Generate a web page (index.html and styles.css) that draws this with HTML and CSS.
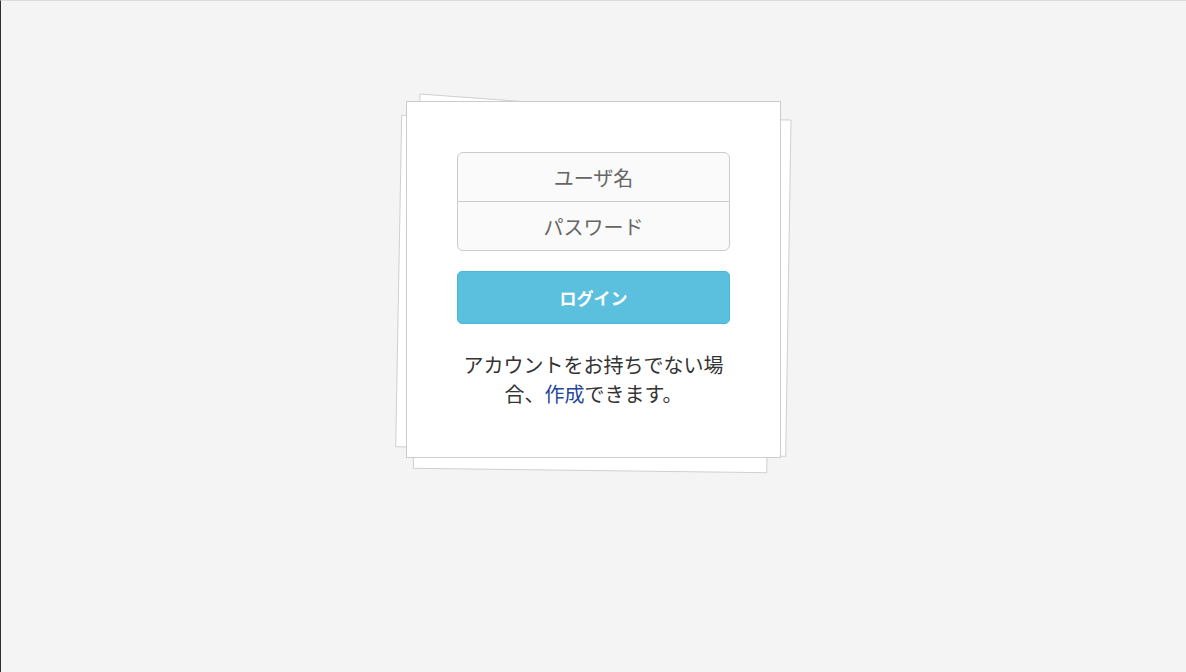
FILE: index.html
```html
<!DOCTYPE html>
<html lang="ja">
<head>
<meta charset="utf-8">
<title>ログイン</title>
<link rel="stylesheet" href="styles.css">
</head>
<body>
<main class="page">
  <div class="stack">
    <svg class="sheets" width="420" height="400" viewBox="0 0 420 400" aria-hidden="true">
      <polygon class="sheet" points="15.7,34.3 405,39 399.7,375.3 9.7,365.7"/>
      <polygon class="sheet" points="34,13 387,39 380.7,391.7 27.3,387.3"/>
    </svg>
    <form class="card">
      <div class="field-group">
        <input class="field field-top" type="text" placeholder="ユーザ名">
        <input class="field field-bottom" type="password" placeholder="パスワード">
      </div>
      <button class="btn-login" type="button">ログイン</button>
      <p class="note">アカウントをお持ちでない場合、<a href="#" class="link">作成</a>できます。</p>
    </form>
  </div>
</main>
</body>
</html>
```

FILE: styles.css
```css
html, body {
  margin: 0;
  padding: 0;
  height: 100%;
}
body {
  background: #f4f4f4;
  border-top: 1px solid #dcdcdc;
  border-left: 1px solid #2e2e2e;
  box-sizing: border-box;
  font-family: "Noto Sans CJK JP", "Noto Sans", sans-serif;
  color: #333;
}
.page {
  display: flex;
  justify-content: center;
  padding-top: 100px;
}
.stack {
  position: relative;
  width: 375px;
}
.sheets {
  position: absolute;
  left: -20px;
  top: -20px;
  overflow: visible;
}
.sheet {
  fill: #fff;
  stroke: #cfcfcf;
  stroke-width: 1;
}
.card {
  position: relative;
  box-sizing: border-box;
  width: 375px;
  background: #fff;
  border: 1px solid #cccccc;
  padding: 50px 50px 49px;
  display: flex;
  flex-direction: column;
}
.field-group {
  display: flex;
  flex-direction: column;
}
.field {
  box-sizing: border-box;
  height: 50px;
  width: 100%;
  margin: 0;
  border: 1px solid #cccccc;
  background: #fafafa;
  font-family: inherit;
  font-size: 20px;
  text-align: center;
  color: #555;
  outline: none;
  padding: 0 12px;
}
.field::placeholder {
  color: #666;
  opacity: 1;
}
.field-top {
  border-radius: 6px 6px 0 0;
}
.field-bottom {
  margin-top: -1px;
  border-radius: 0 0 6px 6px;
}
.btn-login {
  margin-top: 20px;
  height: 53px;
  border: 1px solid #46b8da;
  border-radius: 5px;
  background: #5bc0de;
  color: #fff;
  font-family: inherit;
  font-size: 17px;
  font-weight: bold;
  cursor: pointer;
}
.note {
  margin: 27px 0 0;
  font-size: 20px;
  line-height: 1.42857;
  text-align: center;
  color: #333;
}
.link {
  color: #25489a;
  text-decoration: none;
}
```
